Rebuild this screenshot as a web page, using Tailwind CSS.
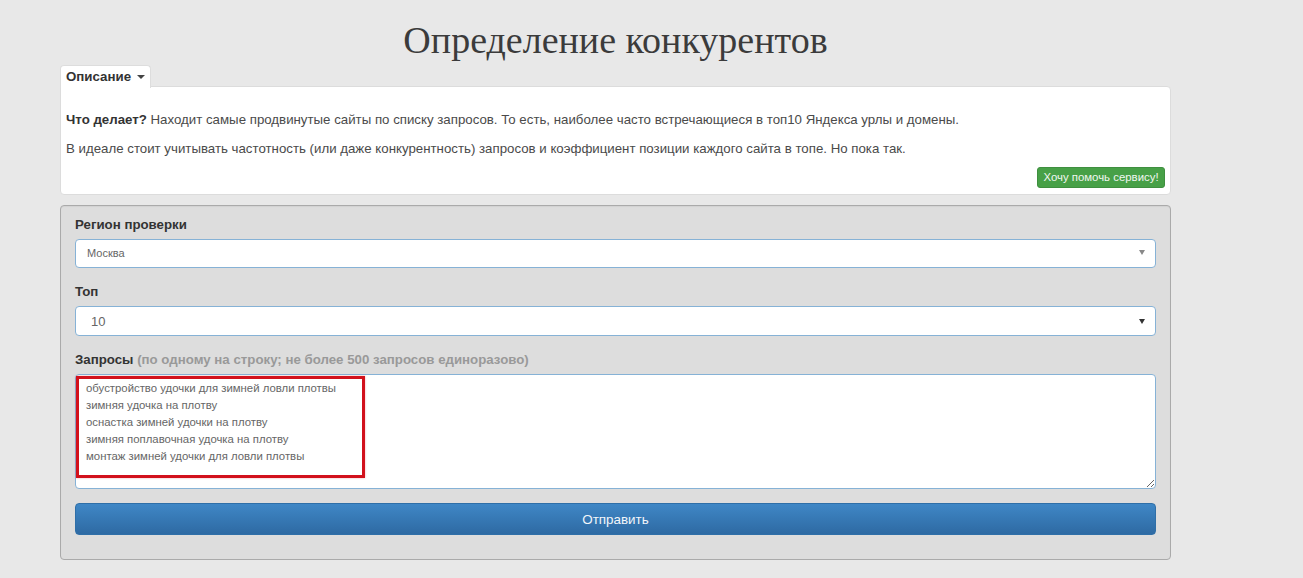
<!DOCTYPE html>
<html lang="ru">
<head>
<meta charset="utf-8">
<script src="https://cdn.jsdelivr.net/npm/@tailwindcss/browser@4"></script>
</head>
<body class="bg-[#e8e8e8] h-[578px] overflow-hidden font-['Liberation_Sans',sans-serif] text-[#333]">
<main class="w-[1111px] ml-[60px]">
  <h1 class="h-[65px] pt-[17px] text-center text-[38px] leading-[46px] font-['Liberation_Serif',serif] text-[#3b3b3b]">Определение конкурентов</h1>

  <div class="relative z-10 w-[91px] h-[23px] -mb-[2px] bg-white rounded-t-[4px] border border-[#ddd] border-b-0 flex items-center pl-[5px] gap-[6px] text-[13.3px] font-bold text-[#333]">
    Описание
    <span class="w-0 h-0 border-x-[4px] border-x-transparent border-t-[4px] border-t-[#444]"></span>
  </div>

  <section class="h-[109px] bg-white rounded-b-[4px] rounded-tr-[4px] border border-[#dcdcdc] px-[5px] pt-[24px] text-[13.28px] leading-[18px] text-[#4a4a4a] flex flex-col">
    <p><b class="text-[#333]">Что делает?</b> Находит самые продвинутые сайты по списку запросов. То есть, наиболее часто встречающиеся в топ10 Яндекса урлы и домены.</p>
    <p class="mt-[11px]">В идеале стоит учитывать частотность (или даже конкурентность) запросов и коэффициент позиции каждого сайта в топе. Но пока так.</p>
    <div class="mt-[9px] flex justify-end">
      <span class="h-[21px] w-[128px] rounded-[3px] bg-[#47a047] border border-[#3f8f3f] text-[#f0f7f0] text-[11.4px] leading-[19px] text-center">Хочу помочь сервису!</span>
    </div>
  </section>

  <form class="mt-[10px] h-[355px] bg-[#dddddd] border border-[#aaa] rounded-[4px] px-[14px] pt-[10px] shadow-[inset_0_1px_1px_rgba(0,0,0,0.05)]">
    <label class="block text-[13.28px] leading-[18px] font-bold text-[#333]">Регион проверки</label>
    <div class="mt-[5px] h-[29px] bg-white rounded-[4px] border border-[#86b2d6] flex items-center justify-between pl-[11px] pr-[10px] text-[11px] text-[#666]">
      Москва
      <span class="w-0 h-0 -mt-[3px] border-x-[3.5px] border-x-transparent border-t-[5px] border-t-[#888]"></span>
    </div>

    <label class="block mt-[15px] text-[13.28px] leading-[18px] font-bold text-[#333]">Топ</label>
    <div class="mt-[5px] h-[30px] bg-white rounded-[4px] border border-[#86b2d6] flex items-center justify-between pl-[15px] pr-[10px] pt-[1px] text-[13px] text-[#666]">
      10
      <span class="w-0 h-0 border-x-[3px] border-x-transparent border-t-[5px] border-t-[#333]"></span>
    </div>

    <label class="block mt-[15px] text-[13.28px] leading-[18px] font-bold text-[#333]">Запросы <span class="text-[#999]">(по одному на строку; не более 500 запросов единоразово)</span></label>
    <div class="relative mt-[5px] h-[115px]">
      <textarea readonly class="block w-full h-full bg-white rounded-[4px] border border-[#86b2d6] pl-[10px] pt-[5px] text-[11.36px] leading-[17px] text-[#666] outline-none resize-y">обустройство удочки для зимней ловли плотвы
зимняя удочка на плотву
оснастка зимней удочки на плотву
зимняя поплавочная удочка на плотву
монтаж зимней удочки для ловли плотвы</textarea>
      <div class="absolute left-[1px] top-[2px] w-[289px] h-[102px] border-[3px] border-[#d2111c] shadow-[0_0_2px_rgba(210,17,28,0.35)] pointer-events-none"></div>
    </div>

    <button type="button" class="block mt-[14px] w-full h-[32px] pt-[3px] rounded-[4px] border border-[#2f6fa8] bg-gradient-to-b from-[#3f87c6] to-[#2e6aa3] text-[#f2f6fa] text-[13.4px]">Отправить</button>
  </form>
</main>
</body>
</html>
